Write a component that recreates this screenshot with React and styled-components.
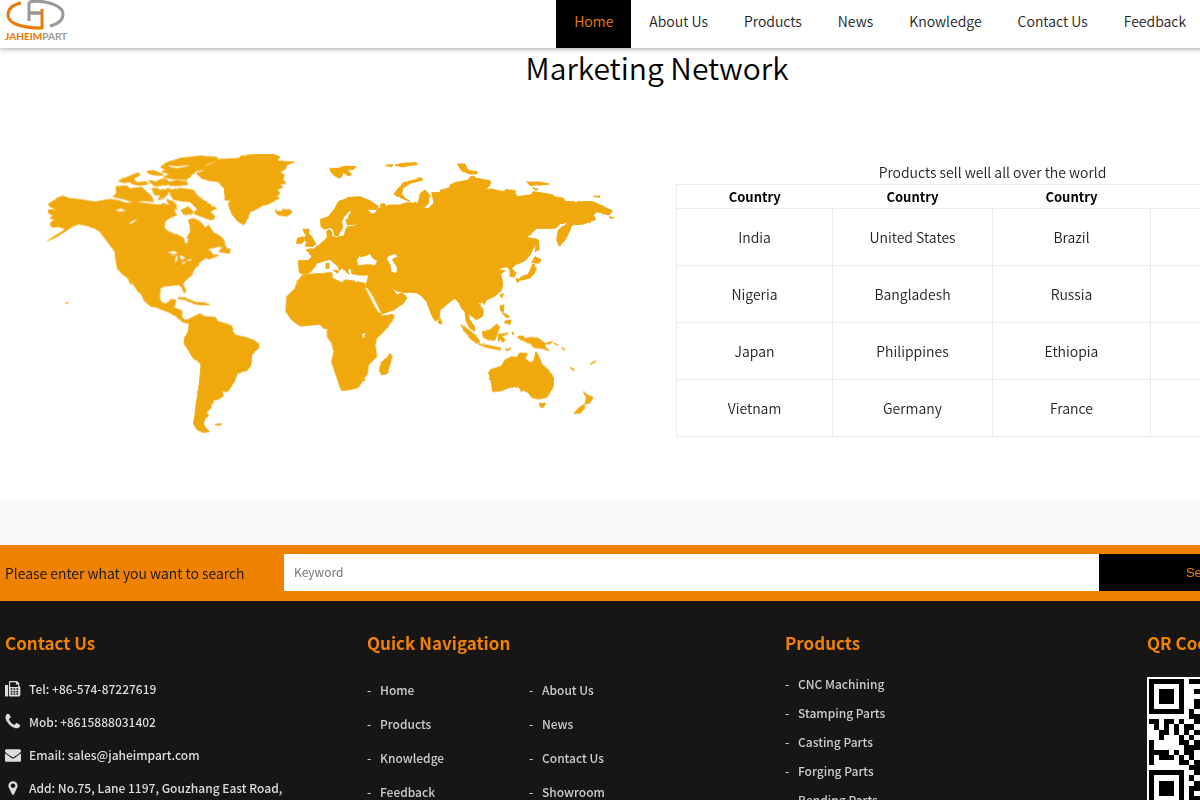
import React, { useState } from "react";
import styled, { createGlobalStyle } from "styled-components";

const GlobalStyle = createGlobalStyle`
  * {
    box-sizing: border-box;
  }
  body {
    margin: 0;
    overflow-x: hidden;
    background-color: #fff;
    color: #222;
    font-family: "Noto Sans CJK SC", "Open Sans", sans-serif;
    font-size: 14px;
    font-weight: 350;
  }
  a {
    color: inherit;
    text-decoration: none;
  }
  ul {
    margin: 0;
    padding: 0;
    list-style: none;
  }
`;

const Page = styled.div`
  min-width: 1314px;
`;

const Header = styled.header`
  position: relative;
  display: flex;
  justify-content: space-between;
  height: 48px;
  padding: 0 110px 0 4px;
  background-color: #fff;
  box-shadow: 0 1px 5px rgba(0, 0, 0, 0.35);
`;

const Nav = styled.nav`
  display: flex;
`;

const NavLink = styled.a`
  padding: 0 18px;
  line-height: 42px;
  color: ${(props) => (props.$active ? "#ef8200" : "#222")};
  background-color: ${(props) => (props.$active ? "#000" : "transparent")};
`;

const Network = styled.section`
  padding-bottom: 62px;
`;

const Heading = styled.h1`
  margin: 0;
  font-size: 30px;
  line-height: 38px;
  font-weight: 350;
  text-align: center;
  color: #000;
`;

const Columns = styled.div`
  display: grid;
  grid-template-columns: 1fr 1fr;
  padding-top: 64px;
`;

const MapBox = styled.div`
  padding-left: 45px;
`;

const WorldMap = styled.svg`
  display: block;
  width: 573px;
  height: 286px;
`;

const TableBox = styled.div`
  padding: 10px 5px 0 19px;
`;

const Table = styled.table`
  width: 100%;
  table-layout: fixed;
  border-collapse: collapse;
  border: 1px solid #ebebeb;
  text-align: center;
  caption {
    line-height: 24px;
  }
  th {
    height: 24px;
    padding: 0;
    font-size: 13px;
    line-height: 23px;
    font-weight: 700;
    color: #000;
  }
  th:nth-child(1) {
    width: 156px;
  }
  th:nth-child(2) {
    width: 160px;
  }
  td {
    height: 57px;
    padding: 0;
    border: 1px solid #ebebeb;
  }
`;

const Band = styled.div`
  height: 46px;
  background-color: #fafafa;
`;

const SearchBar = styled.form`
  display: grid;
  grid-template-columns: 279px 1fr 215px;
  align-items: center;
  padding: 9px 0 10px 5px;
  background-color: #ef8200;
`;

const SearchLabel = styled.label`
  color: #111;
`;

const SearchInput = styled.input`
  height: 37px;
  padding: 0 10px 2px;
  border: 0;
  border-radius: 0;
  background-color: #fff;
  font-family: "Noto Sans CJK SC", sans-serif;
  font-size: 12px;
  &::placeholder {
    color: #757575;
  }
`;

const SearchButton = styled.button`
  height: 37px;
  border: 0;
  background-color: #000;
  color: #ef8200;
  font-family: "Liberation Sans", sans-serif;
  font-size: 13px;
`;

const Footer = styled.footer`
  display: grid;
  grid-template-columns: 362px 418px 362px 1fr;
  padding: 26px 0 40px 5px;
  background-color: #181614;
  color: #ccc;
  font-size: 12px;
  font-weight: 500;
`;

const FooterTitle = styled.h3`
  margin: 0;
  font-size: 17px;
  line-height: 32px;
  font-weight: 700;
  color: #ef8200;
`;

const ContactList = styled.ul`
  padding-top: 13px;
  li {
    display: flex;
    align-items: center;
    gap: 8px;
    line-height: 33px;
    color: #ddd;
  }
  svg {
    width: 16px;
    height: 16px;
    fill: #ddd;
  }
`;

const LinkList = styled.ul`
  display: grid;
  grid-template-columns: ${(props) => (props.$double ? "162px 162px" : "1fr")};
  padding-top: ${(props) => (props.$double ? "14px" : "10px")};
  line-height: ${(props) => (props.$double ? "34px" : "29px")};
  a::before {
    content: "-";
    display: inline-block;
    width: 13px;
  }
`;

const QrCode = styled.svg`
  display: block;
  width: 130px;
  height: 130px;
  margin-top: 18px;
`;

const links = [
  "Home",
  "About Us",
  "Products",
  "News",
  "Knowledge",
  "Contact Us",
  "Feedback",
];

const footerLinks = [...links, "Showroom"];

const products = [
  "CNC Machining",
  "Stamping Parts",
  "Casting Parts",
  "Forging Parts",
  "Bending Parts",
];

const countries = [
  ["India", "United States", "Brazil", ""],
  ["Nigeria", "Bangladesh", "Russia", ""],
  ["Japan", "Philippines", "Ethiopia", ""],
  ["Vietnam", "Germany", "France", ""],
];

const contacts = [
  {
    icon: "M64 448h224q64 0 64 64v1152q0 64-64 64H64q-64 0-64-64V512q0-64 64-64zM544 0h800l256 256v320q120 30 120 150v842q0 160-160 160H544q-96 0-96-96V96q0-96 96-96zm32 128v544h896V384h-256V128zm64 672v192h192V800zm320 0v192h192V800zm320 0v192h192V800zM640 1088v192h192v-192zm320 0v192h192v-192zm320 0v192h192v-192zM640 1376v160h192v-160zm320 0v160h192v-160zm320 0v160h192v-160z",
    text: "Tel: +86-574-87227619",
  },
  {
    icon: "M1600 1240q0 27-10 70.5t-21 68.5q-21 50-122 106-94 51-186 51-27 0-53-3.5t-57.5-12.5-47-14.5-55.5-20.5-49-18q-98-35-175-83-127-79-264-216t-216-264q-48-77-83-175-3-9-18-49t-20.5-55.5-14.5-47-12.5-57.5-3.5-53q0-92 51-186 56-101 106-122 25-11 68.5-21t70.5-10q14 0 21 3 18 6 53 76 11 19 30 54t35 63.5 31 53.5q3 4 17.5 25t21.5 35.5 7 28.5q0 20-28.5 50t-62 55-62 53-28.5 46q0 9 5 22.5t8.5 20.5 14 24 11.5 19q76 137 174 235t235 174q2 1 19 11.5t24 14 20.5 8.5 22.5 5q18 0 46-28.5t53-62 55-62 50-28.5q14 0 28.5 7t35.5 21.5 25 17.5q25 15 53.5 31t63.5 35 54 30q70 35 76 53 3 7 3 21z",
    box: "150 160 1536 1536",
    text: "Mob: +8615888031402",
  },
  {
    icon: "M1792 710v794q0 66-47 113t-113 47h-1472q-66 0-113-47t-47-113v-794q44 49 101 87 362 246 497 345 57 42 92.5 65.5t94.5 48 110 24.5h2q51 0 110-24.5t94.5-48 92.5-65.5q170-123 498-345 57-39 100-87zm0-294q0 79-49 151t-122 123q-376 261-468 325-10 7-42.5 31t-54 38.5-52 32.5-57.5 27-50 9h-2q-23 0-50-9t-57.5-27-52-32.5-54-38.5-42.5-31q-91-64-262-182.5t-205-142.5q-62-42-117-115.5t-55-136.5q0-78 41.5-130t118.5-52h1472q65 0 112.5 47t47.5 113z",
    text: "Email: sales@jaheimpart.com",
  },
  {
    icon: "M1152 640q0-106-75-181t-181-75-181 75-75 181 75 181 181 75 181-75 75-181zm256 0q0 109-33 179l-364 774q-16 33-47.5 52t-67.5 19-67.5-19-46.5-52l-365-774q-33-70-33-179 0-212 150-362t362-150 362 150 150 362z",
    text: "Add: No.75, Lane 1197, Gouzhang East Road,",
  },
];

// Each region has its own origin on the map
const regions = [
  {
    name: "north america",
    x: 90,
    y: 420,
    land: [
      "55 192 75 180 80 174 100 168 115 175 160 180 195 186 210 183 240 178 255 180 265 182 290 190 330 188 360 192 385 195 400 190 412 195 425 200 430 210 440 225 425 230 412 238 405 245 402 262 415 275 440 285 460 293 463 306 470 312 475 305 472 290 482 275 480 255 475 240 490 235 510 245 520 255 525 265 535 255 540 262 550 278 570 288 582 300 585 318 565 320 550 323 525 328 540 332 550 345 566 346 535 358 530 352 515 362 505 370 500 380 490 392 485 405 470 418 458 430 462 440 468 455 462 458 455 440 445 434 420 437 400 438 390 450 388 470 392 485 405 492 418 485 422 478 437 480 435 495 430 502 445 508 455 512 455 530 462 541 480 540 484 546 457 545 445 535 430 522 405 512 380 502 360 497 345 485 335 465 315 445 300 430 295 415 275 400 262 385 258 360 255 335 240 315 225 295 210 275 190 262 165 255 145 252 130 258 118 265 100 278 75 293 52 302 80 285 100 272 105 265 85 260 65 262 60 250 75 238 60 235 70 228 55 218 55 210 80 208 60 200",
      "258 140 290 138 300 146 335 142 355 160 365 170 370 185 340 182 310 187 285 178 250 170 260 158",
      "265 122 300 108 325 98 330 105 310 115 320 128 350 125 355 132 330 136 308 132 300 126 280 128",
      "350 95 368 91 385 97 402 105 380 106 360 102",
      "355 122 380 125 392 118 410 118 415 126 440 122 470 125 472 134 440 137 400 135 375 138",
      "390 82 410 68 450 55 510 48 560 52 565 60 530 72 520 88 495 95 470 118 440 118 400 112 420 102 395 95 410 88",
      "420 150 450 145 490 150 500 165 525 185 560 205 540 215 555 228 545 240 520 232 490 220 503 208 480 185 450 182 430 178 422 165",
      "365 145 385 145 392 165 375 165",
      "390 150 420 145 415 160 400 175 385 180 392 165",
      "410 178 430 185 440 195 435 210 420 200",
      "455 210 475 200 490 215 480 226 460 222",
      "575 318 585 318 590 325 600 328 598 340 570 335",
      "107 487 115 489 108 490",
      "445 472 465 474 485 482 500 488 520 488 538 494 510 494 495 492 480 484 460 478 445 476",
    ],
    water: [
      "415 337 430 333 443 340 430 342",
      "438 350 443 347 440 362 435 366",
      "450 347 465 352 458 360 452 355",
      "455 368 468 366 460 371",
      "470 362 485 357 482 361",
      "260 210 272 206 285 212 270 214",
      "298 248 320 238 312 246 302 251",
      "303 430 308 432 330 468 325 468",
      "415 76 440 80 475 76 470 79 440 84 420 80",
    ],
  },
  {
    name: "south america",
    x: 450,
    y: 870,
    land: [
      "95 88 110 92 122 85 135 78 150 72 165 80 195 82 205 95 230 102 245 108 250 125 255 135 285 142 310 150 327 162 325 175 305 195 303 225 290 242 262 250 255 270 240 295 232 305 215 303 220 318 205 328 190 330 190 338 182 345 185 352 172 362 170 370 175 378 165 385 160 400 165 412 178 425 160 428 140 418 130 400 135 375 138 345 142 320 148 280 152 240 153 222 130 205 115 180 102 160 105 140 115 125 118 100 105 98",
      "195 403 215 401 212 405 200 405",
    ],
  },
  {
    name: "greenland and iceland",
    x: 510,
    y: 420,
    land: [
      "80 100 105 92 95 85 130 68 150 58 205 55 215 48 260 42 310 42 330 52 320 60 345 65 373 65 350 75 345 88 330 95 345 108 338 118 348 130 330 132 338 142 320 150 330 158 322 168 328 175 315 180 300 190 275 198 250 212 240 215 232 235 222 254 205 245 190 228 180 208 175 190 185 182 165 180 165 165 162 145 145 125 120 122 95 115",
      "315 208 325 215 340 208 362 210 366 218 350 228 325 225 318 217",
    ],
  },
  {
    name: "eurasia",
    x: 810,
    y: 420,
    land: [
      "85 362 115 362 122 352 118 338 108 330 125 326 130 328 145 315 165 300 172 290 170 275 178 268 185 275 185 290 200 292 225 287 225 270 235 262 262 255 260 252 232 255 228 240 245 215 238 212 222 230 215 245 218 262 205 285 195 288 190 270 180 262 165 268 153 260 152 238 175 230 195 205 205 185 240 172 270 170 300 182 325 200 320 208 290 208 305 222 315 220 325 205 345 200 360 195 390 195 410 188 440 190 445 185 452 160 465 150 478 165 475 190 460 205 475 205 492 190 488 170 482 158 510 158 512 150 540 143 540 135 555 128 595 120 600 112 610 108 635 118 660 122 662 130 658 138 645 148 665 147 700 155 710 148 735 152 740 170 780 165 790 155 835 162 855 170 880 175 885 185 930 185 970 185 1000 200 1027 212 1018 225 980 215 970 225 977 238 940 252 905 255 898 275 885 300 868 318 860 300 865 270 890 252 895 245 865 255 858 265 800 265 770 292 795 298 792 320 780 345 765 362 735 375 725 385 738 400 732 412 720 408 720 390 712 380 700 382 683 390 705 392 692 402 698 430 695 450 675 468 645 482 625 490 640 510 638 528 620 540 610 532 595 520 598 538 612 558 615 573 600 565 588 542 585 515 575 505 568 490 555 475 540 485 510 510 508 535 495 543 485 525 470 485 455 468 440 458 400 457 378 452 360 438 375 457 382 465 395 458 412 472 400 490 370 510 335 522 325 500 305 472 288 445 290 428 297 405 265 405 245 400 243 385 232 390 238 402 228 395 215 378 200 362 190 350 195 360 215 375 218 382 208 392 205 380 180 358 165 362 145 368 130 385 120 398 100 402 88 398",
      "98 268 118 268 115 280 125 290 138 312 130 320 105 318 110 308 103 295 108 285",
      "82 295 100 290 103 302 95 310 80 310",
      "168 370 177 370 177 385 168 385",
      "190 391 205 392 203 400",
      "180 85 205 85 225 78 258 80 250 88 232 90 245 103 235 108 222 98 210 115 195 108 182 95",
      "345 76 370 74 365 80",
      "375 76 395 70 440 68 442 74 420 76 400 81",
      "372 162 385 145 400 128 455 114 458 120 420 130 398 145 395 162 405 175 420 184 395 175 380 168",
      "335 190 345 192 345 202 330 200",
      "562 72 585 72 590 85 600 92 622 95 620 102 598 102 575 92",
      "770 126 810 126 838 132 815 135 780 135",
      "788 143 805 148 795 151",
      "970 169 990 168 988 172",
      "1017 230 1033 233 1025 236",
      "792 295 805 300 808 328 798 335 795 320",
      "795 350 815 360 805 370 785 368",
      "792 372 798 390 785 412 765 418 742 422 755 410 775 402 785 380",
      "738 415 750 420 742 428",
      "510 537 517 548 510 553 504 545",
    ],
    water: [
      "262 360 268 350 285 350 300 342 305 352 320 365 315 375 290 372 265 375",
      "355 350 375 342 378 350 365 358 372 370 382 385 378 398 365 395 362 375 352 358",
    ],
  },
  {
    name: "africa",
    x: 810,
    y: 780,
    land: [
      "98 45 130 42 185 38 188 55 215 68 225 60 245 62 285 70 288 85 300 108 318 145 330 158 335 168 372 165 368 180 350 205 320 235 315 255 320 290 295 315 292 340 280 360 265 382 245 388 215 392 205 365 195 335 185 305 192 275 185 250 172 230 172 205 160 205 150 193 125 195 90 198 65 180 48 155 50 110 75 85 85 60",
      "360 280 366 290 352 340 335 345 328 330 335 305 350 295",
    ],
    water: [
      "278 222 286 220 284 232 279 234",
      "287 83 292 85 308 110 322 138 332 158 326 156 314 138 300 110",
    ],
  },
  {
    name: "oceania",
    x: 1290,
    y: 780,
    land: [
      "210 105 220 100 216 115",
      "155 125 168 123 163 133",
      "210 138 222 135 220 155 212 150",
      "215 157 232 165 240 172 228 172",
      "228 182 243 180 240 193 222 187",
      "157 215 180 210 200 192 208 200 203 215 195 240 178 240 160 232",
      "92 195 110 205 135 225 150 245 140 250 120 235",
      "145 252 175 256 215 265 210 270 170 262",
      "225 268 243 265 232 272",
      "205 222 235 220 215 228 225 240 218 248 210 235 205 245",
      "247 215 252 222 247 223",
      "262 230 280 228 283 236 305 232 325 235 345 250 345 260 358 272 335 265 310 262 305 252 290 246 270 238",
      "345 250 368 244 360 252",
      "372 250 385 255 380 256",
      "395 262 405 270 400 270",
      "180 330 215 318 225 300 245 290 260 292 270 278 292 282 285 295 300 308 312 302 318 275 328 292 335 312 355 330 370 350 370 378 358 400 350 412 325 417 305 412 295 398 280 390 275 395 265 380 240 382 215 392 188 395 185 370 178 345",
      "328 430 347 430 340 443 330 440",
      "460 395 472 405 490 412 478 430 465 430 470 415",
      "465 432 468 440 450 460 432 460 445 445",
      "420 321 433 330 428 331",
      "483 311 497 302 493 309",
    ],
  },
];

// # is a dark module
const qrRows = [
  "#######.##.#..###.#######",
  "#.....#....##.#.#.#.....#",
  "#.###.#..#.#.##...#.###.#",
  "#.###.#...#..#.##.#.###.#",
  "#.###.#..#.###..#.#.###.#",
  "#.....#..#..#.#...#.....#",
  "#######.#.#.#.#.#.#######",
  "........##..##.##........",
  "##.##.#..#.##..#.##.#..#.",
  ".#.#.#.##.#..##.#..##.#.#",
  "..##.#.#.#.##..##.#..##..",
  "..#...#.#..#.##..#.##..#.",
  "#.....##.#..#..##.#..#.##",
  "#......###.#.##..#.##.#..",
  "####.#.##.#..#.##..#..##.",
  "#.###.#.#.##..#.##.#.#..#",
  "#.....##.#.#.##.#####.#..",
  "........##..##..#...##.#.",
  "#######..#.#.#.##.#.#..##",
  "#.....#.#..##...#...##.#.",
  "#.###.#..#..##.######..#.",
  "#.###.#.##.#..#..#.##.#.#",
  "#.###.#.#.#.##.#.##..#.#.",
  "#.....#.##.#.#..##.#..##.",
  "#######.#..##.#.#..##.#.#",
];

const Logo = () => (
  <svg width="64" height="44" viewBox="0 0 64 44" role="img" aria-label="Jaheimpart">
    <g fill="none" strokeWidth="3">
      <path d="M17 3C7 5 4 10 4 15c0 8 12 13 34 13V9M24 13h14" stroke="#ec7a08" />
      <path d="M25 21V2M25 13h12M25 2c17-3 34 4 34 12 0 6-5 10-13 12" stroke="#999" />
    </g>
    <text
      x="1"
      y="40"
      fontFamily="Lato, sans-serif"
      fontSize="10"
      fontWeight="900"
      fill="#ec7a08"
    >
      JAHEIM<tspan fill="#999" fontWeight="700">PART</tspan>
    </text>
  </svg>
);

const App = () => {
  const [keyword, setKeyword] = useState("");

  return (
    <Page>
      <GlobalStyle />
      <Header>
        <a href="#home">
          <Logo />
        </a>
        <Nav>
          {links.map((link) => (
            <NavLink key={link} href="#" $active={link === "Home"}>
              {link}
            </NavLink>
          ))}
        </Nav>
      </Header>
      <Network>
        <Heading>Marketing Network</Heading>
        <Columns>
          <MapBox>
            <WorldMap
              viewBox="135 450 1719 858"
              fill="#f0a911"
              stroke="#f0a911"
              strokeWidth="3"
              strokeLinejoin="round"
            >
              {/* roughens the coast lines */}
              <filter id="coast" x="0" y="0" width="1" height="1">
                <feTurbulence type="fractalNoise" baseFrequency="0.08" numOctaves="1" seed="3" />
                <feDisplacementMap
                  in="SourceGraphic"
                  scale="7"
                  xChannelSelector="R"
                  yChannelSelector="G"
                />
              </filter>
              <g filter="url(#coast)">
                {regions.map((region) => (
                  <g key={region.name} transform={`translate(${region.x} ${region.y})`}>
                    {region.land.map((points) => (
                      <polygon key={points} points={points} />
                    ))}
                    {(region.water || []).map((points) => (
                      <polygon
                        key={points}
                        points={points}
                        fill="#fff"
                        stroke="#fff"
                        strokeWidth="1"
                      />
                    ))}
                  </g>
                ))}
              </g>
            </WorldMap>
          </MapBox>
          <TableBox>
            <Table>
              <caption>Products sell well all over the world</caption>
              <thead>
                <tr>
                  <th>Country</th>
                  <th>Country</th>
                  <th>Country</th>
                  <th>Country</th>
                </tr>
              </thead>
              <tbody>
                {countries.map((row) => (
                  <tr key={row[0]}>
                    {row.map((country, i) => (
                      <td key={i}>{country}</td>
                    ))}
                  </tr>
                ))}
              </tbody>
            </Table>
          </TableBox>
        </Columns>
      </Network>
      <Band />
      <SearchBar onSubmit={(e) => e.preventDefault()}>
        <SearchLabel htmlFor="keyword">
          Please enter what you want to search
        </SearchLabel>
        <SearchInput
          id="keyword"
          placeholder="Keyword"
          value={keyword}
          onChange={(e) => setKeyword(e.target.value)}
        />
        <SearchButton type="submit">Search</SearchButton>
      </SearchBar>
      <Footer>
        <div>
          <FooterTitle>Contact Us</FooterTitle>
          <ContactList>
            {contacts.map(({ icon, box, text }) => (
              <li key={text}>
                <svg viewBox={box || "0 0 1792 1792"} fillRule="evenodd">
                  <path d={icon} />
                </svg>
                {text}
              </li>
            ))}
          </ContactList>
        </div>
        <div>
          <FooterTitle>Quick Navigation</FooterTitle>
          <LinkList $double>
            {footerLinks.map((link) => (
              <li key={link}>
                <a href="#">{link}</a>
              </li>
            ))}
          </LinkList>
        </div>
        <div>
          <FooterTitle>Products</FooterTitle>
          <LinkList>
            {products.map((product) => (
              <li key={product}>
                <a href="#">{product}</a>
              </li>
            ))}
          </LinkList>
        </div>
        <div>
          <FooterTitle>QR Code</FooterTitle>
          <QrCode viewBox="0 0 130 130">
            <rect width="130" height="130" fill="#fff" />
            <g transform="translate(1.5 1.5) scale(5.1)" shapeRendering="crispEdges">
              {qrRows.map((row, y) =>
                row
                  .split("")
                  .map((cell, x) =>
                    cell === "#" ? (
                      <rect key={`${x}-${y}`} x={x} y={y} width="1" height="1" />
                    ) : null
                  )
              )}
            </g>
          </QrCode>
        </div>
      </Footer>
    </Page>
  );
};

export default App;
